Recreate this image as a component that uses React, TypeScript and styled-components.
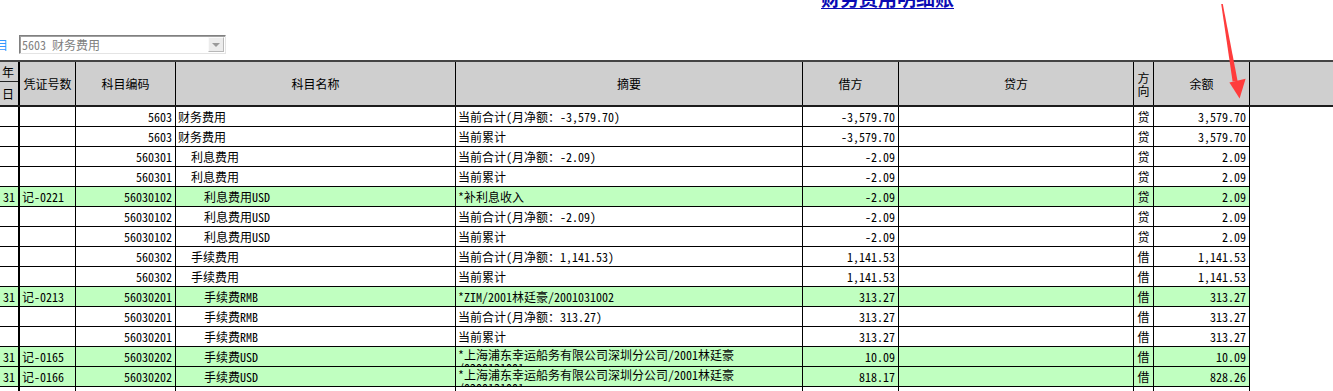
import React from "react";
import styled, { createGlobalStyle } from "styled-components";

const GlobalStyle = createGlobalStyle`
  html, body { margin: 0; padding: 0; background: #ffffff; }
  body { width: 1333px; height: 391px; overflow: hidden; }
  * { box-sizing: border-box; }
`;

const FONT = `"Noto Sans Mono CJK SC", "Noto Sans CJK SC", "Liberation Mono", monospace`;
const COLS = "20px 56px 100px 280px 347px 96px 235px 20px 96px";

const Page = styled.div`
  position: relative;
  width: 1333px;
  height: 391px;
  overflow: hidden;
  font-family: ${FONT};
  font-size: 12px;
  color: #000;
`;

const TopArea = styled.div`
  height: 60px;
  display: flex;
  flex-direction: column;
`;

const TitleRow = styled.div`
  height: 35px;
  padding-left: 821px;
`;

const Title = styled.div`
  margin-top: -12px;
  font-family: "Noto Sans CJK SC", sans-serif;
  font-weight: 700;
  font-size: 19px;
  line-height: 20px;
  color: #0a0ab4;
  text-decoration: underline;
  text-underline-offset: 2px;
  white-space: nowrap;
`;

const FilterRow = styled.div`
  display: flex;
  align-items: center;
  height: 19px;
`;

const Label = styled.span`
  margin-left: -4px;
  width: 23px;
  color: #3399ff;
  font-size: 12px;
  line-height: 19px;
`;

const SelectBox = styled.div`
  width: 207px;
  height: 19px;
  display: flex;
  align-items: center;
  border-top: 1px solid #808080;
  border-left: 1px solid #808080;
  border-bottom: 1px solid #e4e4e4;
  border-right: 1px solid #e4e4e4;
  box-shadow: inset 1px 1px 0 #a0a0a0;
  background: #fff;
  padding-left: 2px;
`;

const SelectText = styled.span`
  flex: 1;
  color: #808080;
  font-size: 12px;
  line-height: 17px;
  white-space: nowrap;
`;

const DropButton = styled.div`
  width: 16px;
  height: 15px;
  margin-right: 1px;
  background: #ececec;
  border-top: 1px solid #fafafa;
  border-left: 1px solid #fafafa;
  border-right: 1px solid #b8b8b8;
  border-bottom: 1px solid #b8b8b8;
  display: flex;
  align-items: center;
  justify-content: center;
`;

const Triangle = styled.div`
  width: 0;
  height: 0;
  border-left: 4px solid transparent;
  border-right: 4px solid transparent;
  border-top: 4px solid #9a9a9a;
`;

const HeaderRow = styled.div`
  display: grid;
  grid-template-columns: ${COLS} 1fr;
  width: 1333px;
  height: 47px;
  background: #cfcfcf;
  border-top: 2px solid #444;
  border-bottom: 2px solid #1c1c1c;
`;

const HeaderCell = styled.div<{ $narrow?: boolean }>`
  display: flex;
  align-items: center;
  justify-content: center;
  text-align: center;
  border-right: 1px solid #000;
  font-size: 12px;
  line-height: ${(p) => (p.$narrow ? "13px" : "16px")};
  padding: 0 ${(p) => (p.$narrow ? "3px" : "0")};
  overflow: hidden;
`;

const HeaderFiller = styled.div``;

const SplitCell = styled.div`
  display: flex;
  flex-direction: column;
  border-right: 2px solid #000;
`;

const SplitTop = styled.div`
  height: 20px;
  border-bottom: 1px solid #222;
  display: flex;
  align-items: center;
  justify-content: flex-end;
  padding-right: 4px;
`;

const SplitBottom = styled.div`
  flex: 1;
  display: flex;
  align-items: center;
  justify-content: flex-end;
  padding-right: 4px;
`;

const Row = styled.div<{ $green?: boolean }>`
  display: grid;
  grid-template-columns: ${COLS};
  width: 1250px;
  height: 20px;
  background: ${(p) => (p.$green ? "#c0ffc0" : "#ffffff")};
`;

const Cell = styled.div<{
  $align?: "left" | "right" | "center";
  $indent?: number;
  $thick?: boolean;
  $wrap?: boolean;
}>`
  height: 20px;
  border-right: ${(p) => (p.$thick ? "2px" : "1px")} solid #000;
  border-bottom: 1px solid #000;
  text-align: ${(p) => p.$align || "left"};
  padding-left: ${(p) => (p.$align === "right" || p.$align === "center" ? 0 : 2 + (p.$indent || 0) * 13)}px;
  padding-right: ${(p) => (p.$align === "right" ? 3 : p.$wrap ? 4 : 0)}px;
  padding-top: ${(p) => (p.$wrap ? 1 : 0)}px;
  white-space: ${(p) => (p.$wrap ? "normal" : "nowrap")};
  line-height: ${(p) => (p.$wrap ? "13px" : "19px")};
  overflow: hidden;
`;

const Arrow = styled.svg`
  position: absolute;
  left: 0;
  top: 0;
  pointer-events: none;
`;

type Line = {
  day?: string;
  voucher?: string;
  code: string;
  name: string;
  level: number;
  summary: string;
  debit: string;
  credit?: string;
  dir: string;
  balance: string;
  green?: boolean;
  wrap?: boolean;
};

const LONG = "*上海浦东幸运船务有限公司深圳分公司/2001林廷豪\u200B/0200131001";

const rows: Line[] = [
  { code: "5603", name: "财务费用", level: 0, summary: "当前合计(月净额：-3,579.70)", debit: "-3,579.70", dir: "贷", balance: "3,579.70" },
  { code: "5603", name: "财务费用", level: 0, summary: "当前累计", debit: "-3,579.70", dir: "贷", balance: "3,579.70" },
  { code: "560301", name: "利息费用", level: 1, summary: "当前合计(月净额：-2.09)", debit: "-2.09", dir: "贷", balance: "2.09" },
  { code: "560301", name: "利息费用", level: 1, summary: "当前累计", debit: "-2.09", dir: "贷", balance: "2.09" },
  { day: "31", voucher: "记-0221", code: "56030102", name: "利息费用USD", level: 2, summary: "*补利息收入", debit: "-2.09", dir: "贷", balance: "2.09", green: true },
  { code: "56030102", name: "利息费用USD", level: 2, summary: "当前合计(月净额：-2.09)", debit: "-2.09", dir: "贷", balance: "2.09" },
  { code: "56030102", name: "利息费用USD", level: 2, summary: "当前累计", debit: "-2.09", dir: "贷", balance: "2.09" },
  { code: "560302", name: "手续费用", level: 1, summary: "当前合计(月净额：1,141.53)", debit: "1,141.53", dir: "借", balance: "1,141.53" },
  { code: "560302", name: "手续费用", level: 1, summary: "当前累计", debit: "1,141.53", dir: "借", balance: "1,141.53" },
  { day: "31", voucher: "记-0213", code: "56030201", name: "手续费RMB", level: 2, summary: "*ZIM/2001林廷豪/2001031002", debit: "313.27", dir: "借", balance: "313.27", green: true },
  { code: "56030201", name: "手续费RMB", level: 2, summary: "当前合计(月净额：313.27)", debit: "313.27", dir: "借", balance: "313.27" },
  { code: "56030201", name: "手续费RMB", level: 2, summary: "当前累计", debit: "313.27", dir: "借", balance: "313.27" },
  { day: "31", voucher: "记-0165", code: "56030202", name: "手续费USD", level: 2, summary: LONG, debit: "10.09", dir: "借", balance: "10.09", green: true, wrap: true },
  { day: "31", voucher: "记-0166", code: "56030202", name: "手续费USD", level: 2, summary: LONG, debit: "818.17", dir: "借", balance: "828.26", green: true, wrap: true },
  { code: "", name: "", level: 0, summary: "", debit: "", dir: "", balance: "" },
];

export default function App() {
  return (
    <>
      <GlobalStyle />
      <Page>
        <TopArea>
          <TitleRow>
            <Title>财务费用明细账</Title>
          </TitleRow>
          <FilterRow>
            <Label>目</Label>
            <SelectBox>
              <SelectText>5603 财务费用</SelectText>
              <DropButton>
                <Triangle />
              </DropButton>
            </SelectBox>
          </FilterRow>
        </TopArea>

        <HeaderRow>
          <SplitCell>
            <SplitTop>年</SplitTop>
            <SplitBottom>日</SplitBottom>
          </SplitCell>
          <HeaderCell>凭证号数</HeaderCell>
          <HeaderCell>科目编码</HeaderCell>
          <HeaderCell>科目名称</HeaderCell>
          <HeaderCell>摘要</HeaderCell>
          <HeaderCell>借方</HeaderCell>
          <HeaderCell>贷方</HeaderCell>
          <HeaderCell $narrow>方向</HeaderCell>
          <HeaderCell>余额</HeaderCell>
          <HeaderFiller />
        </HeaderRow>

        {rows.map((r, i) => (
          <Row key={i} $green={r.green}>
            <Cell $thick $align="right">{r.day}</Cell>
            <Cell>{r.voucher}</Cell>
            <Cell $align="right">{r.code}</Cell>
            <Cell $indent={r.level}>{r.name}</Cell>
            <Cell $wrap={r.wrap}>{r.summary}</Cell>
            <Cell $align="right">{r.debit}</Cell>
            <Cell $align="right">{r.credit}</Cell>
            <Cell $align="center">{r.dir}</Cell>
            <Cell $align="right">{r.balance}</Cell>
          </Row>
        ))}

        <Arrow width="1333" height="391" viewBox="0 0 1333 391">
          <polygon points="1221.2,4 1222.8,4 1237.6,81 1232.6,81.6" fill="#ff3c3c" />
          <polygon points="1229.4,82.6 1245.6,78.8 1239.6,98.4" fill="#ff3c3c" />
        </Arrow>
      </Page>
    </>
  );
}
